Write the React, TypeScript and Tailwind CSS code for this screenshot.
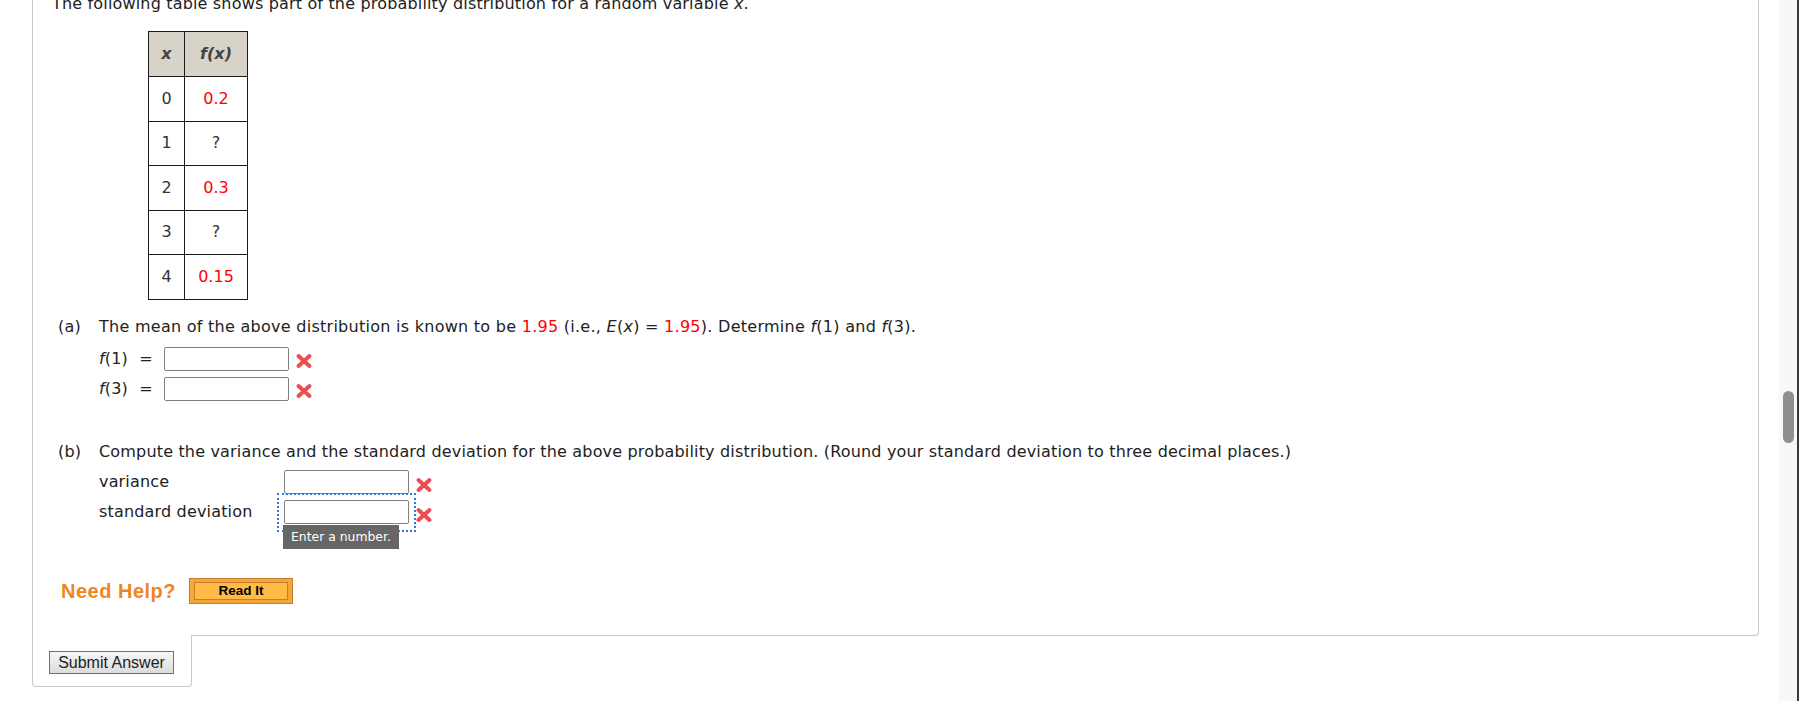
import React from "react";

const rows = [
  { x: "0", fx: "0.2", known: true },
  { x: "1", fx: "?", known: false },
  { x: "2", fx: "0.3", known: true },
  { x: "3", fx: "?", known: false },
  { x: "4", fx: "0.15", known: true },
];

function WrongMark({ className = "" }: { className?: string }) {
  return (
    <svg width="18" height="16" viewBox="0 0 18 16" className={className}>
      <path
        d="M3.5 3 L14.5 13 M14.5 3 L3.5 13"
        stroke="#ef4b53"
        strokeWidth="4"
        strokeLinecap="round"
        fill="none"
      />
    </svg>
  );
}

function AnswerBox() {
  return (
    <input
      type="text"
      className="h-[24px] w-[125px] rounded-[2px] border border-[#808080] bg-white outline-none"
    />
  );
}

export default function App() {
  return (
    <div className="flex h-[701px] w-full overflow-hidden bg-white text-[16px] leading-[20px] tracking-[0.17px] text-[#222] [font-family:'DejaVu_Sans',Verdana,sans-serif]">
      <div className="w-[1779px] shrink-0">
        {/* question card, top edge is scrolled off */}
        <div className="ml-[32px] flow-root h-[636px] w-[1727px] rounded-br-[4px] border-x border-b border-[#c8c8c8] pl-[19px]">
          <p className="-mt-[6px]">
            The following table shows part of the probability distribution for a random variable <i>x</i>.
          </p>

          <table className="ml-[96px] mt-[17px] border-collapse text-center tracking-normal">
            <thead>
              <tr className="bg-[#d7d3c9] font-bold italic text-[#444]">
                <th className="h-[45px] w-[36px] border border-[#1a1a1a] p-0">x</th>
                <th className="w-[63px] border border-[#1a1a1a] p-0">f(x)</th>
              </tr>
            </thead>
            <tbody>
              {rows.map((r) => (
                <tr key={r.x}>
                  <td className="h-[44.5px] border border-[#1a1a1a] p-0 text-[#333]">{r.x}</td>
                  <td
                    className={
                      r.known
                        ? "border border-[#1a1a1a] p-0 text-[#ff0000]"
                        : "border border-[#1a1a1a] p-0 text-[#333]"
                    }
                  >
                    {r.fx}
                  </td>
                </tr>
              ))}
            </tbody>
          </table>

          {/* part (a) */}
          <div className="ml-[6px] mt-[17px] flex">
            <span className="w-[41px] shrink-0">(a)</span>
            <div>
              <p className="tracking-[0.27px]">
                The mean of the above distribution is known to be <span className="text-[#ff0000]">1.95</span> (i.e.,{" "}
                <i>E</i>(<i>x</i>) = <span className="text-[#ff0000]">1.95</span>). Determine <i>f</i>(1) and{" "}
                <i>f</i>(3).
              </p>
              <div className="mt-[10.5px] flex flex-col gap-[6px]">
                {["1", "3"].map((n) => (
                  <div key={n} className="flex h-[24px] items-center">
                    <span className="w-[38px]">
                      <i>f</i>({n})
                    </span>
                    <span className="w-[18px] text-center">=</span>
                    <div className="ml-[9px]">
                      <AnswerBox />
                    </div>
                    <WrongMark className="ml-[6px] mt-[3px]" />
                  </div>
                ))}
              </div>
            </div>
          </div>

          {/* part (b) */}
          <div className="ml-[6px] mt-[40.5px] flex">
            <span className="w-[41px] shrink-0">(b)</span>
            <div>
              <p>
                Compute the variance and the standard deviation for the above probability distribution. (Round your
                standard deviation to three decimal places.)
              </p>
              <div className="mt-[8.5px] flex flex-col gap-[6px]">
                <div className="flex h-[24px] items-center">
                  <span className="w-[185px]">variance</span>
                  <AnswerBox />
                  <WrongMark className="ml-[6px] mt-[5px]" />
                </div>
                <div className="flex h-[24px] items-center">
                  <span className="w-[185px]">standard deviation</span>
                  <div className="relative">
                    <AnswerBox />
                    <div className="pointer-events-none absolute -left-[7px] -right-[7px] -top-[7px] -bottom-[8px] border-2 border-dotted border-[#2b7bdc]" />
                    <div className="absolute left-[-1px] top-[25px] z-10 flex h-[24px] w-[116px] items-center whitespace-nowrap bg-[#666] pl-[8px] text-[12.4px] tracking-normal text-white">
                      Enter a number.
                    </div>
                  </div>
                  <WrongMark className="relative z-10 ml-[6px] mt-[5px]" />
                </div>
              </div>
            </div>
          </div>

          {/* help */}
          <div className="ml-[9px] mt-[54px] flex h-[26px] items-center">
            <span className="text-[20px] font-bold tracking-[0.5px] text-[#f0861e] [font-family:'Liberation_Sans',Arial,sans-serif]">
              Need Help?
            </span>
            <button className="ml-[13px] h-[26px] w-[104px] border border-[#c97a2b] bg-[#f5a53a] px-[4px] py-[3px]">
              <span className="flex h-full w-full items-center justify-center border border-[#c77f2a] bg-[#ffbb45] text-[13.5px] font-bold tracking-normal text-black [font-family:'Liberation_Sans',Arial,sans-serif]">
                Read It
              </span>
            </button>
          </div>
        </div>

        {/* submit tab */}
        <div className="relative z-10 -mt-px ml-[32px] h-[52px] w-[160px] rounded-b-[4px] border-x border-b border-[#c8c8c8] bg-white pl-[16px] pt-[16px]">
          <button className="h-[23px] w-[125px] border border-[#707070] bg-gradient-to-b from-[#f6f6f6] to-[#dcdcdc] text-[16px] leading-[20px] tracking-normal text-[#222] [font-family:'Liberation_Sans',Arial,sans-serif]">
            Submit Answer
          </button>
        </div>
      </div>

      {/* scrollbar */}
      <div className="h-full w-[20px] shrink-0 border-r-2 border-[#3a3a3a] bg-[#f8f8f8] pl-[4px] pt-[391px]">
        <div className="h-[52px] w-[11px] rounded-full bg-[#8f8f8f]" />
      </div>
    </div>
  );
}
